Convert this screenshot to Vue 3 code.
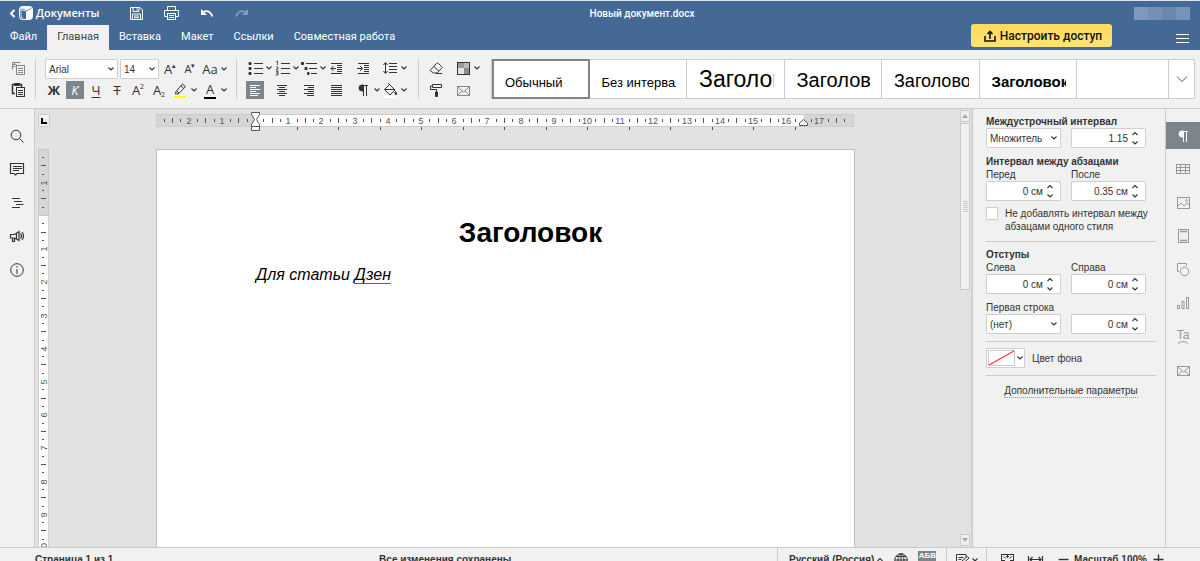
<script setup>
import { h, ref } from 'vue'

const glyphs = {
  copy: '<path d="M3.500 10.500V3.500h8M5.500 5.500V3M3.500 5.500h4M3.500 7.500h3"/><rect x="7.500" y="6.500" width="8" height="9"/><path d="M9 9.500h5M9 11.500h5M9 13.500h5"/>',
  paste: '<path d="M6 12.500H3.500v-9h9V6" stroke-width="1.500"/><path d="M5.500 2.500h5v2h-5z" fill="currentColor"/><rect x="7.500" y="6.500" width="8" height="9"/><path d="M9 9.500h5M9 11.500h5M9 13.500h5"/>',
  bullets: '<path d="M8 4.500h9M8 9.500h9M8 14.500h9"/><path d="M3 3.500h2v2H3zM3 8.500h2v2H3zM3 13.500h2v2H3z" fill="currentColor"/>',
  numbers: '<path d="M8 4.500h9M8 9.500h9M8 14.500h9"/><path d="M3 3l1.500-1v4M3 8h2v1.500L3 11h2.500M3 12.500h2v1.500H3.500h1.500V16H2.500" stroke-width=".8"/>',
  levels: '<path d="M6 4.500h11M9 9.500h8M11 14.500h6"/><path d="M1.500 3.500h2v2h-2zM5 8.500h2v2H5zM7.500 13.500h1.500v2H7.500z" fill="currentColor"/>',
  outdent: '<path d="M4 4.500h11M4 14.500h11M10 6.500h5M10 8.500h5M10 10.500h5M10 12.500h5M9 9.500H4M6.500 7L4 9.500 6.500 12"/>',
  indent: '<path d="M4 4.500h11M4 14.500h11M10 6.500h5M10 8.500h5M10 10.500h5M10 12.500h5M3 9.500h5.500M6 7l2.500 2.500L6 12"/>',
  spacing: '<path d="M8 4.500h8M8 7.500h8M8 10.500h8M8 13.500h8M4.500 4v10M2.500 6l2-2.500 2 2.500M2.500 12l2 2.500 2-2.500"/>',
  left: '<path d="M4 4.500h10M4 6.500h6M4 8.500h10M4 10.500h6M4 12.500h10M4 14.500h8"/>',
  center: '<path d="M4 4.500h10M6 6.500h6M4 8.500h10M6 10.500h6M4 12.500h10M6 14.500h6"/>',
  right: '<path d="M4 4.500h10M8 6.500h6M4 8.500h10M8 10.500h6M4 12.500h10M7 14.500h7"/>',
  justify: '<path d="M4 4.500h11M4 6.500h11M4 8.500h11M4 10.500h11M4 12.500h11M4 14.500h11"/>',
  pilcrow: '<path d="M9.500 4v11M12.500 4v11M8 4.500h6"/><path d="M9.500 4H8a2.700 2.700 0 0 0 0 6h1.500z" fill="currentColor"/>',
  fill: '<path d="M3.500 8.500l5-5 5.500 5.500-5 5zM7 2l2 2M4 8.500h9"/><path d="M14.500 10.500c1.500 2 1.500 3 .500 3s-1.500-1 -.500-3z" fill="currentColor"/><path d="M3 16h12" stroke="#fff" stroke-width="2"/>',
  eraser: '<path d="M3.500 11l6-6.500q1-1 2 0l3 3q1 1 0 2L10 14H6.500l-3-2q-.500-.500 0-1zM7 7.500l4.500 4.500M9 14.500h6"/>',
  roller: '<path d="M5.500 3.500h9v3h-9zM5.500 5h-2v3.500h6V11"/><path d="M8.500 11h2v4.500h-2z" fill="currentColor"/>',
  palette: '<rect x="4" y="4" width="6" height="5" fill="#999" stroke="none"/><rect x="10" y="4" width="5" height="5" fill="#bbb" stroke="none"/><rect x="4" y="9" width="6" height="6" fill="#e4e4e4" stroke="none"/><rect x="10" y="9" width="5" height="6" fill="#8a8a8a" stroke="none"/><rect x="3.500" y="3.500" width="12" height="12"/>',
  mail: '<rect x="3.500" y="5.500" width="12" height="9"/><path d="M4 6l5.500 5L15 6M4 14l4-4M15 14l-4-4"/>',
  pen: '<path d="M5 10.500l6.500-7.500 3 2.500L8 12.500l-3.500.5zM6 10l2 2M10 5l2.500 2"/><path d="M3 16h12" stroke="#ff0" stroke-width="2"/>',
  search: '<circle cx="8" cy="8" r="4.800"/><path d="M11.500 11.500l4 4"/>',
  comment: '<path d="M2.500 3.500h13v10H9L7.500 15 6 13.500H2.500zM5 6.500h9M5 8.500h9M5 10.500h6" stroke-width="1.200"/>',
  nav: '<path d="M4 4.500h8M6 7.500h8M8 10.500h7.500M4 13.500h8" stroke-width="1.200"/>',
  horn: '<path d="M2.500 7.500h4L11 4.500v9L6.500 11h-4zM4.500 11v3.500h2V11M12.500 6.500q2 2.500 0 5M14 5q3 4 0 8M8.500 6v6" stroke-width="1.200"/>',
  info: '<circle cx="9" cy="9" r="6.300"/><path d="M9 8v5M9 5v1.500"/>',
  table: '<rect x="2.500" y="4.500" width="13" height="9"/><path d="M2.500 7.500h13M2.500 10.500h13M6.500 4.500v9M11.500 4.500v9"/>',
  image: '<rect x="3.500" y="3.500" width="12" height="11"/><path d="M4 12l3-3 3 3 3-3 2.500 2"/><circle cx="12.500" cy="6.500" r="1"/>',
  page: '<rect x="4.500" y="2.500" width="10" height="13"/><path d="M6 4.500h7M6 13.500h7" stroke-width="1.500"/>',
  shapes: '<path d="M5 10.500H3.500v-8h9V5"/><circle cx="10.500" cy="10.500" r="4.300"/>',
  chart: '<rect x="3.500" y="11.500" width="2" height="3"/><rect x="8" y="7.500" width="2" height="7"/><rect x="12.500" y="3.500" width="2" height="11"/>',
  save: '<path d="M3.500 3.500h9.500l2.500 2.500v9.500h-12zM6 3.500v4h6v-4M5.500 15.500v-5.500h8v5.500M7 12h5M7 13.700h5M10 4.500v2"/>',
  print: '<path d="M5.500 6.500v-4h8v4M5.500 12.500h-3v-6h14v6h-3"/><rect x="5.500" y="9.500" width="8" height="6"/><path d="M7 11.500h5M7 13.500h5"/>',
  undo: '<path d="M6 8q6.500-3 9.500 4.500" stroke-width="1.800"/><path d="M4 5v6h6z" fill="currentColor" stroke="none"/>',
  redo: '<path d="M13.500 8Q7 5 4 12.500" stroke-width="1.800"/><path d="M16 5v6h-6z" fill="currentColor" stroke="none"/>',
  logo: '<rect x="2.500" y="2.500" width="13" height="13" rx="3" fill="currentColor"/><path d="M3 6.500q3-.5 6 1V15H6q-3 0-3-3z" fill="#446995" stroke="none"/><path d="M3.500 5q4 0 6.500 2l4.500-3" stroke="#446995" stroke-width=".8"/><path d="M4 7.500v4.500q0 2 2 2" stroke-width=".8"/>',
  share: '<path d="M4 9v5h10V9M9 12V5M6.500 7L9 4.500 11.500 7" stroke-width="1.600"/>',
  menu: '<path d="M3 5.500h13M3 9.500h13M3 13.500h13"/>',
  globe: '<circle cx="9" cy="9" r="6.300"/><ellipse cx="9" cy="9" rx="3" ry="6.300"/><path d="M9 2.500v13M3 9h12M4 5.500h10M4 12.500h10"/>',
  review: '<path d="M13 6V3.500H3.500v12h9M5.500 6.500h5M5.500 8.500h3M8 12.500l1-2.500 5.500-4.500 1.500 1.500L10.500 12z"/>',
  fitpage: '<rect x="3.500" y="3.500" width="12" height="12"/><path d="M9.500 4v3M9.500 15v-3M4 9.500h3M15 9.500h-3M8 6l1.500-1.500L11 6M5.500 5.500l2 2M13.500 5.500l-2 2"/>',
  fitwidth: '<path d="M2.500 5v8M16.500 5v8M4 8.500h11M6.500 6L4 8.500 6.500 11M12.500 6L15 8.500 12.500 11" stroke-width="1.200"/>',
  minus: '<path d="M4.500 8.500h10" stroke-width="1.400"/>',
  plus: '<path d="M4.500 8.500h10M9.500 3.500v10" stroke-width="1.400"/>',
}

const Icon = (props) =>
  h('svg', {
    width: 18, height: 18, viewBox: '0 0 18 18', fill: 'none',
    stroke: 'currentColor', 'aria-hidden': 'true', innerHTML: glyphs[props.name],
  })
Icon.props = ['name']

const Chevron = (props) =>
  h('svg', { width: 8, height: 8, viewBox: '0 0 8 8', fill: 'none', stroke: 'currentColor', 'aria-hidden': 'true' },
    [h('path', { d: props.up ? 'M1.500 5L4 2.500 6.500 5' : 'M1.500 2.500L4 5l2.500-2.500', 'stroke-width': 1.1 })])
Chevron.props = { up: Boolean }

const tabs = ['Файл', 'Главная', 'Вставка', 'Макет', 'Ссылки', 'Совместная работа']

const lists = [
  { icon: 'bullets', label: 'Маркеры', menu: true },
  { icon: 'numbers', label: 'Нумерация', menu: true },
  { icon: 'levels', label: 'Многоуровневый список', menu: true },
  { icon: 'outdent', label: 'Уменьшить отступ' },
  { icon: 'indent', label: 'Увеличить отступ' },
  { icon: 'spacing', label: 'Междустрочный интервал', menu: true },
  { icon: 'left', label: 'По левому краю', on: true },
  { icon: 'center', label: 'По центру' },
  { icon: 'right', label: 'По правому краю' },
  { icon: 'justify', label: 'По ширине' },
  { icon: 'pilcrow', label: 'Непечатаемые символы', menu: true },
  { icon: 'fill', label: 'Цвет фона абзаца', menu: true },
]

const styles = [
  { text: 'Обычный', kind: 's13', on: true },
  { text: 'Без интервала', kind: 's13' },
  { text: 'Заголовок', kind: 's23' },
  { text: 'Заголовок', kind: 's20' },
  { text: 'Заголовок', kind: 's18' },
  { text: 'Заголовок', kind: 's15' },
]

const leftTools = [
  ['search', 'Поиск'], ['comment', 'Комментарии'], ['nav', 'Навигация'],
  ['horn', 'Обратная связь'], ['info', 'О программе'],
]
const rightTools = [
  ['pilcrow', 'Абзац'], ['table', 'Таблица'], ['image', 'Изображение'], ['page', 'Колонтитулы'],
  ['shapes', 'Фигура'], ['chart', 'Диаграмма'], ['text', 'Text Art'], ['mail', 'Слияние'],
]

const CM = 33.2
const marks = (zero, from, to) => {
  const out = []
  for (let q = from; q <= to; q++) {
    if (q === 0) continue
    const at = Math.round(zero + (q * CM) / 4)
    out.push({ at, num: q % 4 === 0 ? Math.abs(q / 4) : null, long: q % 2 === 0 })
  }
  return out
}
const hMarks = marks(99, -11, 71).filter((m) => m.at < 640 || m.at > 652)
const vMarks = marks(67, -7, 40)
const tabStops = Array.from({ length: 13 }, (_, i) => Math.round(99 + (i + 1) * CM * 1.25))

const before = ref('0 см')
const after = ref('0.35 см')
const line = ref('1.15')
const indentL = ref('0 см')
const indentR = ref('0 см')
const first = ref('0 см')
</script>

<template>
  <div class="app">
    <header class="header">
      <div class="title-row">
        <a class="brand" href="#"><svg width="7" height="9" viewBox="0 0 7 9" fill="none" stroke="currentColor" stroke-width="2"><path d="M5.500 1L2 4.500 5.500 8" /></svg><Icon name="logo" />Документы</a>
        <div class="quick">
          <button aria-label="Сохранить"><Icon name="save" /></button>
          <button aria-label="Печать"><Icon name="print" /></button>
          <button aria-label="Отменить"><Icon name="undo" /></button>
          <button class="dim" aria-label="Повторить"><Icon name="redo" /></button>
        </div>
        <div class="doc-name">Новый документ.docx</div>
        <div class="user"><i></i><i></i><i></i><i></i></div>
      </div>
      <div class="tab-row">
        <nav class="tabs">
          <a v-for="(t, i) in tabs" :key="t" href="#" :class="{ active: i === 1 }">{{ t }}</a>
        </nav>
        <button class="share"><Icon name="share" />Настроить доступ</button>
        <button class="burger" aria-label="Меню"><Icon name="menu" /></button>
      </div>
    </header>

    <div class="toolbar">
      <div class="clip">
        <button class="tool faded" aria-label="Копировать"><Icon name="copy" /></button>
        <button class="tool" aria-label="Вставить"><Icon name="paste" /></button>
      </div>
      <div class="font-group">
        <div class="row">
          <label class="select font-name"><select aria-label="Шрифт"><option>Arial</option></select><Chevron /></label>
          <label class="select font-size"><select aria-label="Размер шрифта"><option>14</option></select><Chevron /></label>
          <button class="tool letter" aria-label="Увеличить размер">A<sup>▴</sup></button>
          <button class="tool letter small" aria-label="Уменьшить размер">A<sup>▾</sup></button>
          <button class="tool letter menu" aria-label="Регистр"><span>Aa</span><Chevron /></button>
        </div>
        <div class="row wide">
          <button class="tool letter bold">Ж</button>
          <button class="tool letter italic on">К</button>
          <button class="tool letter under">Ч</button>
          <button class="tool letter strike">Т</button>
          <button class="tool letter" aria-label="Надстрочные знаки">A<sup>2</sup></button>
          <button class="tool letter" aria-label="Подстрочные знаки">A<sub>2</sub></button>
          <button class="tool menu" aria-label="Цвет выделения"><Icon name="pen" /><Chevron /></button>
          <button class="tool letter menu" aria-label="Цвет шрифта"><span class="ink">A</span><Chevron /></button>
        </div>
      </div>
      <div class="para-group">
        <button v-for="b in lists" :key="b.icon" class="tool" :class="{ on: b.on, menu: b.menu }" :aria-label="b.label">
          <Icon :name="b.icon" /><Chevron v-if="b.menu" />
        </button>
      </div>
      <div class="extra-group">
        <button class="tool" aria-label="Очистить стиль"><Icon name="eraser" /></button>
        <button class="tool menu" aria-label="Цветовая схема"><Icon name="palette" /><Chevron /></button>
        <button class="tool" aria-label="Копировать стиль"><Icon name="roller" /></button>
        <button class="tool faded" aria-label="Слияние"><Icon name="mail" /></button>
      </div>
      <div class="gallery">
        <div class="style-list">
          <button v-for="(s, i) in styles" :key="i" :class="{ chosen: s.on }"><span :class="s.kind">{{ s.text }}</span></button>
        </div>
        <button class="more" aria-label="Все стили">
          <svg width="12" height="8" viewBox="0 0 12 8" fill="none" stroke="currentColor"><path d="M1 1.500l5 5 5-5" /></svg>
        </button>
      </div>
    </div>

    <main class="body">
      <nav class="side left-side">
        <button v-for="[icon, label] in leftTools" :key="icon" :aria-label="label"><Icon :name="icon" /></button>
      </nav>

      <section class="editor">
        <div class="v-col">
          <button class="tab-kind" aria-label="Табуляция"><svg width="6" height="6"><path d="M1 0v5h5" fill="none" stroke="#000" stroke-width="2" /></svg></button>
          <svg class="v-ruler" width="12" height="420">
            <rect x="0.5" y="0.5" width="10" height="430" fill="#fff" stroke="#d0d0d0" />
            <rect x="0.5" y="0.5" width="10" height="66" fill="#d5d5d5" stroke="#c8c8c8" />
            <template v-for="m in vMarks" :key="m.at">
              <text v-if="m.num" :transform="`translate(9 ${m.at}) rotate(-90)`" text-anchor="middle" class="num">{{ m.num }}</text>
              <rect v-else :x="m.long ? 3 : 4" :y="m.at - 1" :width="m.long ? 5 : 2" height="1" fill="#555" />
            </template>
          </svg>
        </div>
        <div class="canvas">
          <svg class="h-ruler" width="699" height="40">
            <rect x="0.5" y="5.5" width="697" height="12" fill="#d5d5d5" stroke="#cbcbcb" />
            <rect x="100" y="6" width="548" height="11" fill="#fff" />
            <template v-for="m in hMarks" :key="m.at">
              <text v-if="m.num" :x="m.at" y="15" text-anchor="middle" class="num">{{ m.num }}</text>
              <rect v-else :x="m.at" :y="m.long ? 9 : 10" width="1" :height="m.long ? 5 : 3" fill="#555" />
            </template>
            <rect v-for="t in tabStops" :key="t" :x="t" y="18" width="1" height="3" fill="#555" />
            <path d="M95.500 3.500h8v2l-3 5 3 5v6h-8v-6l3-5-3-5zM95.500 17.500h8" fill="#fff" stroke="#555" />
            <path d="M643.500 16.500v-2.500l4-3.500 4 3.500v2.500z" fill="#fff" stroke="#555" />
          </svg>
          <article class="page">
            <h1>Заголовок</h1>
            <p>Для статьи <span>Дзен</span></p>
          </article>
        </div>
        <div class="scroll">
          <button aria-label="Вверх"><i class="up"></i></button>
          <div class="thumb"><i></i></div>
          <button class="last" aria-label="Вниз"><i></i></button>
        </div>
      </section>

      <aside class="panel">
        <h2>Междустрочный интервал</h2>
        <div class="pair">
          <label class="select"><select aria-label="Тип интервала"><option>Множитель</option></select><Chevron /></label>
          <div class="spin"><input v-model="line" aria-label="Значение интервала" /><div><button aria-label="Больше"><Chevron up /></button><button aria-label="Меньше"><Chevron /></button></div></div>
        </div>
        <h2 class="gap">Интервал между абзацами</h2>
        <div class="pair">
          <label for="before">Перед</label><label for="after">После</label>
          <div class="spin"><input id="before" v-model="before" /><div><button aria-label="Больше"><Chevron up /></button><button aria-label="Меньше"><Chevron /></button></div></div>
          <div class="spin"><input id="after" v-model="after" /><div><button aria-label="Больше"><Chevron up /></button><button aria-label="Меньше"><Chevron /></button></div></div>
        </div>
        <label class="check"><input type="checkbox" /><span>Не добавлять интервал между абзацами одного стиля</span></label>
        <hr />
        <h2>Отступы</h2>
        <div class="pair">
          <label for="il">Слева</label><label for="ir">Справа</label>
          <div class="spin"><input id="il" v-model="indentL" /><div><button aria-label="Больше"><Chevron up /></button><button aria-label="Меньше"><Chevron /></button></div></div>
          <div class="spin"><input id="ir" v-model="indentR" /><div><button aria-label="Больше"><Chevron up /></button><button aria-label="Меньше"><Chevron /></button></div></div>
        </div>
        <div class="pair gap">
          <label class="full" for="first">Первая строка</label>
          <div class="select"><select id="first"><option>(нет)</option></select><Chevron /></div>
          <div class="spin"><input v-model="first" aria-label="Отступ первой строки" /><div><button aria-label="Больше"><Chevron up /></button><button aria-label="Меньше"><Chevron /></button></div></div>
        </div>
        <hr />
        <div class="color-row">
          <button id="bg"><svg width="27" height="16"><rect x="0.5" y="0.5" width="26" height="15" fill="#fff" stroke="#ccc" /><path d="M1 15L26 1" stroke="#f33" stroke-width="1.200" /></svg><Chevron /></button>
          <label for="bg">Цвет фона</label>
        </div>
        <hr />
        <a class="advanced" href="#">Дополнительные параметры</a>
      </aside>

      <nav class="side right-side">
        <button v-for="([icon, label], i) in rightTools" :key="icon" :class="{ active: i === 0 }" :aria-label="label">
          <svg v-if="icon === 'text'" width="18" height="18"><text x="9" y="11" text-anchor="middle" class="ta">Ta</text><path d="M4 15.500q5-4 10 0" fill="none" stroke="currentColor" /></svg>
          <Icon v-else :name="icon" />
        </button>
      </nav>
    </main>

    <footer class="status">
      <div class="status-bar">
        <span class="pages">Страница 1 из 1</span>
        <span class="saved">Все изменения сохранены</span>
        <div class="lang"><button>Русский (Россия) <Chevron up /></button><button aria-label="Язык документа"><Icon name="globe" /></button><button class="spell">АБВ</button></div>
        <div class="review"><button aria-label="Рецензирование"><Icon name="review" /><Chevron /></button></div>
        <div class="zoom">
          <button aria-label="По размеру страницы"><Icon name="fitpage" /></button>
          <button aria-label="По ширине страницы"><Icon name="fitwidth" /></button>
          <button aria-label="Уменьшить"><Icon name="minus" /></button>
          <span>Масштаб 100%</span>
          <button aria-label="Увеличить"><Icon name="plus" /></button>
        </div>
      </div>
    </footer>
  </div>
</template>

<style>
body { background: #f1f1f1; }
</style>

<style scoped>
* { box-sizing: border-box; }
svg { display: block; flex: none; }
button { margin: 0; padding: 0; border: 0; background: none; font: inherit; color: inherit; cursor: pointer; }
a { color: inherit; text-decoration: none; }
.app {
  display: flex; flex-direction: column; height: 100vh; overflow: hidden;
  font: 10px/13px "Liberation Sans", Arial, sans-serif; color: #333; background: #f1f1f1;
}

.header { flex: none; background: #446995; color: #fff; border-top: 1px solid #dfe5ec; font-family: Roboto, sans-serif; font-size: 11px; }
.title-row { display: flex; align-items: center; height: 24px; padding-left: 9px; }
.brand { display: flex; align-items: center; gap: 1px; font: 600 11px/16px "Open Sans", sans-serif; width: 118px; }
.quick { display: flex; gap: 17px; }
.quick button { width: 18px; }
.dim { opacity: .35; }
.doc-name { flex: 1; text-align: center; font-size: 10px; font-weight: 500; }
.user { width: 166px; display: flex; justify-content: flex-end; padding-right: 10px; }
.user i { width: 14px; height: 13px; background: #7f98bd; }
.user i:nth-child(2) { background: #7690b3; }
.user i:nth-child(3) { background: #6888b0; }
.user i:nth-child(4) { background: #7893b8; }
.tab-row { display: flex; height: 25px; align-items: flex-start; }
.tabs { display: flex; flex: 1; }
.tabs a { padding: 0 10px; height: 25px; line-height: 24px; white-space: nowrap; }
.tabs .active { background: #f1f1f1; color: #444; }
.share {
  display: flex; align-items: center; justify-content: center; width: 141px; height: 23px; margin-top: -1px; gap: 1px;
  border-radius: 3px; background: linear-gradient(#ffd95c, #ffe27a); color: #111;
  font: 500 12px/16px Roboto, sans-serif;
}
.burger { margin: 4px 9px 0 61px; }

.toolbar { flex: none; display: flex; height: 59px; padding: 9px 5px 0 9px; border-bottom: 1px solid #cbcbcb; }
.toolbar > div { height: 40px; }
.clip { width: 27px; border-right: 1px solid #cbcbcb; display: grid; align-content: space-between; }
.tool { display: flex; align-items: center; justify-content: center; width: 18px; height: 18px; color: #333; }
.tool.menu { width: 27px; justify-content: flex-start; gap: 1px; }
.tool.on { background: #7d858c; color: #fff; }
.faded { opacity: .55; }
.font-group { width: 201px; padding-left: 9px; border-right: 1px solid #cbcbcb; display: flex; flex-direction: column; justify-content: space-between; }
.row { display: flex; gap: 2px; align-items: center; }
.wide { gap: 3px; }
.letter { font: 13px/18px "Open Sans", sans-serif; }
.letter.small { font-size: 11px; }
.letter.menu > span { width: 18px; text-align: center; }
.letter sup, .letter sub { font-size: 7px; line-height: 7px; }
.letter sup { align-self: flex-start; margin-top: 2px; }
.letter sub { align-self: flex-end; margin-bottom: 1px; }
.letter.bold { font-weight: 700; }
.letter.italic { font-style: italic; }
.under { text-decoration: underline; text-underline-offset: 2px; }
.strike { text-decoration: line-through; }
.letter .ink { height: 17px; line-height: 15px; border-bottom: 2px solid #000; width: 12px; margin: 0 3px; }
.letter.menu > .ink { width: 12px; }
.select { display: flex; align-items: center; position: relative; height: 20px; background: #fff; border: 1px solid #cfcfcf; border-radius: 1px; }
.select select { appearance: none; flex: 1; min-width: 0; width: 100%; height: 18px; padding: 0 12px 0 3px; border: 0; background: none; font: inherit; color: #333; }
.select svg { position: absolute; right: 2px; pointer-events: none; }
.font-name { width: 73px; }
.font-size { width: 39px; }
.para-group { width: 182px; padding-left: 9px; border-right: 1px solid #cbcbcb; display: grid; grid-template-columns: repeat(6, 27px); align-content: space-between; }
.extra-group { width: 72px; padding-left: 8px; display: grid; grid-template-columns: 27px 27px; align-content: space-between; }
.gallery { flex: 1; display: flex; background: #fff; border: 1px solid #cbcbcb; color: #000; }
.style-list { display: grid; grid-template-columns: repeat(6, minmax(0, 1fr)); width: 585px; }
.style-list button { padding: 0 10px 0 12px; border-right: 1px solid #cbcbcb; overflow: hidden; }
.style-list button.chosen { margin: -1px 0; border: 2px solid #848484; padding: 0 10px 0 11px; }
.style-list span { display: block; overflow: hidden; white-space: nowrap; text-align: left; line-height: 26px; margin-top: 7px; }
.s13 { font-size: 13px; }
.s23 { font-size: 23px; }
.s20 { font-size: 20px; }
.s18 { font-size: 18px; }
.s15 { font-size: 15px; font-weight: 700; }
.style-list .s23 { margin-top: 0; }
.style-list .s20 { margin-top: 2px; }
.style-list .s18 { margin-top: 4px; }
.style-list .s15 { margin-top: 6px; }
.more { margin-left: auto; width: 26px; border-left: 1px solid #cbcbcb; display: grid; place-items: center; color: #555; }

.body { flex: 1; min-height: 0; display: flex; }
.side { flex: none; width: 34px; padding-top: 13px; display: grid; align-content: space-between; }
.side button { display: grid; place-items: center; height: 27px; }
.left-side { height: 174px; color: #333; }
.right-side { height: 275px; color: #999; }
.right-side .active { background: #7d858c; color: #fff; }
.ta { font: 12px "Liberation Sans", sans-serif; fill: currentColor; stroke: none; }

.editor { flex: 1; min-width: 0; display: grid; grid-template-columns: 15px 1fr 12px; background: #e2e2e2; border-left: 1px solid #cbcbcb; overflow: hidden; }
.v-col { padding: 5px 0 0 3px; overflow: hidden; min-height: 0; }
.tab-kind { display: grid; place-items: center; width: 12px; height: 13px; border: 1px solid #cbcbcb; background: #f1f1f1; }
.v-ruler { margin-top: 22px; }
.num { font: 9px "Liberation Sans", sans-serif; fill: #555; }
.canvas { display: flex; flex-direction: column; align-items: center; padding-left: 1px; min-height: 0; overflow: hidden; }
.h-ruler { overflow: visible; }
.page { flex: 1; width: 699px; padding: 65px 49px 0 99px; background: #fff; border: 1px solid #bbbec2; border-bottom: 0; color: #000; }
.page h1 { margin: 0; font-size: 28px; line-height: 36px; text-align: center; }
.page p { margin: 14px 0 0; font-size: 16px; line-height: 20px; font-style: italic; }
.page span { border-bottom: 1px solid #f22; }
.scroll { display: flex; flex-direction: column; padding: 0 1px 0 0; border-right: 1px solid #d5d5d5; }
.scroll button { height: 12px; border: 1px solid #cbcbcb; background: #f1f1f1; display: grid; place-items: center; margin-top: 1px; }
.scroll button i { border: 3px solid transparent; border-top: 4px solid #aaa; border-bottom: 0; }
.scroll button .up { border-top: 0; border-bottom: 4px solid #aaa; }
.thumb { height: 167px; margin-top: 1px; border: 1px solid #cbcbcb; background: #f1f1f1; display: grid; place-items: center; }
.thumb i { width: 5px; height: 11px; background: repeating-linear-gradient(#cbcbcb 0 1px, transparent 1px 2px); }
.scroll .last { margin: auto 0 1px; }

.panel { flex: none; width: 194px; padding: 6px 9px 0 13px; border: solid #cbcbcb; border-width: 0 1px; }
.panel h2 { margin: 0; font-size: 10px; line-height: 13px; }
.panel .gap { margin-top: 7px; }
.pair { display: grid; grid-template-columns: 75px 75px; column-gap: 10px; }
.full { grid-column: span 2; }
.spin { display: flex; height: 20px; background: #fff; border: 1px solid #cfcfcf; border-radius: 1px; }
.spin input { flex: 1; min-width: 0; border: 0; padding: 0; background: none; text-align: right; font: inherit; color: #333; }
.spin div { width: 17px; display: grid; padding-right: 3px; }
.spin button { display: grid; place-items: center; height: 9px; }
.check { display: flex; gap: 7px; margin: 6px 0 8px; }
.check input { appearance: none; flex: none; width: 12px; height: 13px; margin: 0; background: #fff; border: 1px solid #cfcfcf; }
.check span { width: 150px; }
.panel hr { margin: 7px 0 6px; border: 0; border-top: 1px solid #cbcbcb; }
.color-row { display: flex; align-items: center; gap: 7px; }
.color-row button { display: flex; align-items: center; gap: 1px; width: 39px; height: 20px; padding-left: 1px; border: 1px solid #cfcfcf; background: #fff; }
.advanced { display: block; width: max-content; margin: 8px auto 0; border-bottom: 1px dotted #999; }

.status { flex: none; height: 14px; border-top: 1px solid #cbcbcb; overflow: hidden; }
.status-bar { display: flex; height: 23px; font-weight: 700; align-items: center; padding-left: 35px; }
.status-bar > div, .status-bar button { display: flex; align-items: center; height: 23px; }
.saved { flex: 1; text-align: center; }
.lang { width: 169px; padding-left: 11px; gap: 8px; border-left: 1px solid #cbcbcb; }
.lang button { white-space: nowrap; gap: 2px; }
.status-bar .spell { height: 18px; width: 18px; background: #7d858c; color: #fff; font-size: 8px; line-height: 10px; justify-content: center; align-items: flex-start; }
.review { width: 40px; padding-left: 6px; border-left: 1px solid #cbcbcb; }
.zoom { width: 214px; padding-left: 11px; gap: 10px; border-left: 1px solid #cbcbcb; }
.zoom span { margin: 0 -8px; }
</style>
